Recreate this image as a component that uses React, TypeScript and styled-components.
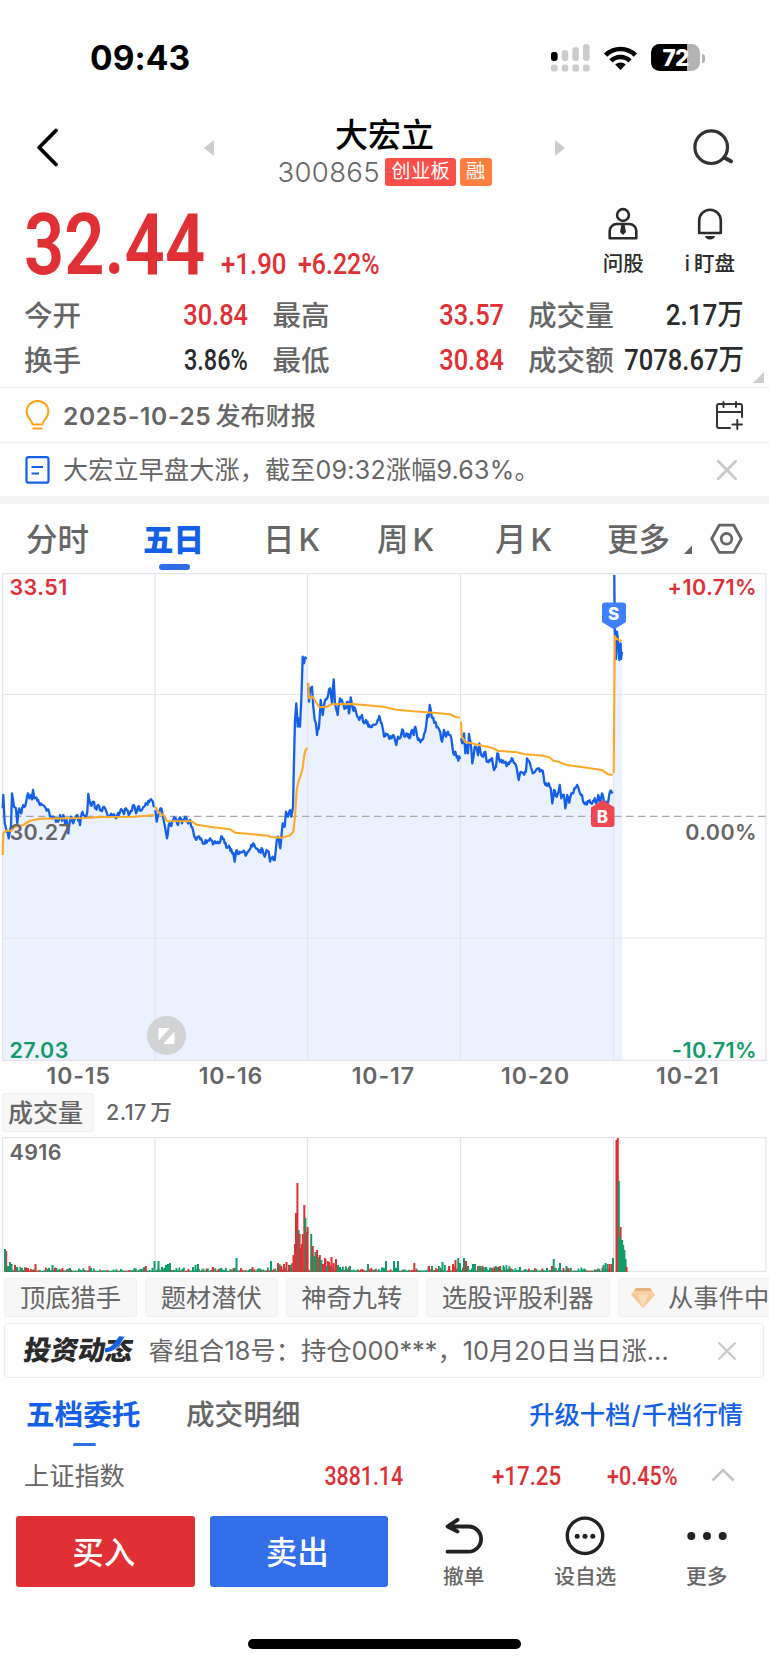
import React from 'react';
import styled, { createGlobalStyle } from 'styled-components';

const RED = '#e03035';
const BLUE = '#1560e8';
const GREEN = '#129b6a';
const GRAY = '#666';
const DARK = '#2b2b2b';

const cjk = `Inter, 'Noto Sans CJK SC', sans-serif`;

const Global = createGlobalStyle`
  * { box-sizing: border-box; }
  body { margin: 0; background: #fff; font-family: ${cjk}; color: ${DARK}; }
  svg { display: block; flex: none; }
`;

const Screen = styled.div`
  width: 769px;
  height: 1665px;
  overflow: hidden;
  display: flex;
  flex-direction: column;
  background: #fefefe;
  white-space: nowrap;
`;

/* Narrow figures used for prices and percentages */
const Num = styled.span<{ $size: number; $x?: number; $color?: string; $origin?: string; $weight?: number }>`
  display: inline-block;
  font-family: Roboto, 'Noto Sans CJK SC', sans-serif;
  font-weight: ${p => p.$weight ?? 500};
  font-size: ${p => p.$size}px;
  line-height: 1;
  color: ${p => p.$color ?? DARK};
  transform: scaleX(${p => p.$x ?? 0.875});
  transform-origin: ${p => p.$origin ?? 'right'} center;
`;

const StatusBar = styled.div`
  height: 110px;
  padding: 5px 64px 0 90px;
  display: flex;
  align-items: center;
  justify-content: space-between;
`;
const Clock = styled.div`
  font: 700 33.5px/1 Inter, sans-serif;
  color: #000;
  padding-top: 2px;
  letter-spacing: 0.1px;
`;
const StatusIcons = styled.div`
  display: flex;
  align-items: center;
  gap: 14px;
`;
const Battery = styled.div`
  position: relative;
  width: 49px;
  height: 27px;
  border-radius: 8.5px;
  background: linear-gradient(90deg, #000 0 73%, #b3b3b3 73%);
  color: #fff;
  font: 800 22.5px/27.5px Inter, sans-serif;
  text-align: center;
  letter-spacing: -0.8px;
  margin-right: 5px;
  &::after {
    content: '';
    position: absolute;
    left: 50.5px;
    top: 9.5px;
    width: 3px;
    height: 9px;
    border-radius: 0 4px 4px 0;
    background: #b3b3b3;
  }
`;

const Header = styled.header`
  height: 85px;
  padding: 0 34px 0 36px;
  display: flex;
  justify-content: space-between;
`;
const HeaderIcon = styled.div`
  width: 42px;
  padding-top: 18px;
  display: flex;
`;
const Pager = styled.div`
  width: 362px;
  margin-right: 2px;
  display: flex;
  justify-content: space-between;
  svg { margin-top: 30px; }
`;
const TitleBlock = styled.div`
  display: flex;
  flex-direction: column;
  align-items: center;
`;
const Title = styled.h1`
  margin: 6px 0 0;
  font: 500 33px/38px ${cjk};
  color: #000;
`;
const CodeRow = styled.div`
  margin-top: 4px;
  display: flex;
  align-items: center;
  gap: 4px;
  font: 400 27.5px/28px Inter, sans-serif;
  letter-spacing: 0.35px;
  color: ${GRAY};
`;
const Code = styled.span`
  margin-right: 1.5px;
  font-weight: 350;
`;
const Tag = styled.span<{ $bg: string }>`
  height: 27.5px;
  padding: 0 6px;
  border-radius: 3px;
  background: ${p => p.$bg};
  color: #fff;
  font: 400 19.2px/27px ${cjk};
`;

const Quote = styled.section`
  position: relative;
  height: 192px;
  padding: 0 26px 0 24px;
`;
const PriceRow = styled.div`
  height: 98px;
  display: flex;
  justify-content: space-between;
`;
const PriceGroup = styled.div`
  display: flex;
  align-items: baseline;
`;
const Price = styled.div`
  width: 197px;
  padding-top: 7px;
`;
const Change = styled.div<{ $w: number }>`
  width: ${p => p.$w}px;
`;
const Actions = styled.div`
  display: flex;
  padding: 11px 8px 0 0;
  gap: 41px;
`;
const Action = styled.div`
  display: flex;
  flex-direction: column;
  align-items: center;
  font: 500 20.5px/24px ${cjk};
  svg { margin-bottom: 12px; }
`;
const SpacedI = styled.span`
  margin-right: 4px;
`;
const Stats = styled.div`
  display: grid;
  grid-template-columns: 61px 163px 24.5px 58px 173px 24.5px 90px 126px;
  grid-template-rows: 45px 45px;
  align-items: center;
`;
const StatLabel = styled.span`
  font: 500 28.6px/45px ${cjk};
  color: ${GRAY};
`;
const StatValue = styled.span`
  text-align: right;
  display: flex;
  justify-content: flex-end;
`;
const Corner = styled.svg`
  position: absolute;
  right: 5px;
  bottom: 4px;
`;

const Notice = styled.div<{ $h: number }>`
  height: ${p => p.$h}px;
  border-top: 1.5px solid #efefef;
  padding: 0 26px 0 25px;
  display: flex;
  align-items: center;
  gap: 13px;
  color: ${GRAY};
`;
const NoticeText = styled.span<{ $medium?: boolean }>`
  flex: 1;
  padding-top: ${p => (p.$medium ? 2 : 0)}px;
  font: ${p => (p.$medium ? 500 : 400)} 25px/36px ${cjk};
  letter-spacing: ${p => (p.$medium ? 0.1 : 0.25)}px;
`;
const NoticeDate = styled.span`
  margin-right: 4px;
  font-weight: 600;
  font-size: 24.5px;
  letter-spacing: 0.7px;
`;
const Band = styled.div`
  height: 8px;
  background: #f3f3f3;
`;

const PeriodTabs = styled.nav`
  height: 69px;
  padding: 0 25px 0 26px;
  display: grid;
  grid-template-columns: 117px 120px 114px 118px 112px 76px 27px 33px;
  color: ${GRAY};
  > svg { margin-top: 19px; }
`;
const PeriodTab = styled.div<{ $on?: boolean }>`
  position: relative;
  font: ${p => (p.$on ? 800 : 500)} ${p => (p.$on ? 30.5 : 31.5)}px/71px ${cjk};
  color: ${p => (p.$on ? BLUE : GRAY)};
  word-spacing: -4.5px;
`;
const TabLine = styled.i<{ $w: number; $x: number; $h: number; $b: number }>`
  position: absolute;
  left: ${p => p.$x}px;
  bottom: ${p => p.$b}px;
  width: ${p => p.$w}px;
  height: ${p => p.$h}px;
  border-radius: 3px;
  background: #2f6ce8;
`;

const ChartBox = styled.div<{ $h: number }>`
  position: relative;
  height: ${p => p.$h}px;
`;
const ChartLabel = styled.span<{ $c?: string; $y: number; $right?: boolean }>`
  position: absolute;
  ${p => (p.$right ? 'right: 12px' : 'left: 9.5px')};
  top: ${p => p.$y}px;
  font: 560 21.5px/22px Inter, sans-serif;
  letter-spacing: 0.4px;
  color: ${p => p.$c ?? GRAY};
`;
const ExpandButton = styled.div`
  position: absolute;
  left: 146.5px;
  top: 443px;
`;
const Marker = styled.div<{ $x: number; $y: number }>`
  position: absolute;
  left: ${p => p.$x}px;
  top: ${p => p.$y}px;
`;
const Dates = styled.div`
  height: 29px;
  padding: 0 5px 0 2.5px;
  display: grid;
  grid-template-columns: repeat(5, 1fr);
  text-align: center;
  font: 560 23px/31px Inter, sans-serif;
  letter-spacing: 0.9px;
  color: ${GRAY};
`;
const VolumeHead = styled.div`
  height: 47px;
  padding: 3px 2px 5px;
  display: flex;
  gap: 12px;
  font: 500 21.5px/38px ${cjk};
  letter-spacing: 0.4px;
  color: ${GRAY};
  word-spacing: -2.5px;
`;
const VolumeChip = styled.div`
  width: 92px;
  height: 39px;
  border: 1px solid #efefef;
  border-radius: 3px;
  background: #f7f7f7;
  padding-left: 5px;
  font: 500 25px/39px ${cjk};
  letter-spacing: 0;
`;

const Chips = styled.div`
  height: 45px;
  padding: 6px 0 0 4px;
  display: flex;
  gap: 8px;
  overflow: hidden;
`;
const Chip = styled.div<{ $w: number; $start?: boolean }>`
  flex: none;
  width: ${p => p.$w}px;
  height: 39px;
  border: 1px solid #f0f0f0;
  border-radius: 3px;
  background: #f7f7f7;
  color: ${GRAY};
  font: 400 25.3px/38px ${cjk};
  display: flex;
  align-items: center;
  justify-content: ${p => (p.$start ? 'flex-start' : 'center')};
  padding-left: ${p => (p.$start ? 12.5 : 0)}px;
  gap: 13px;
`;
const Banner = styled.div`
  margin: 6px 5px 0 4px;
  height: 55px;
  border: 1.5px solid #eee;
  border-radius: 4px;
  padding: 0 27px 0 18.5px;
  display: flex;
  align-items: center;
`;
const Logo = styled.div`
  position: relative;
  width: 125px;
  font: 900 27.2px/53px ${cjk};
  color: ${DARK};
  span { display: inline-block; transform: skewX(-9deg); }
  svg { position: absolute; left: 80px; top: 12px; }
`;
const BannerText = styled.span`
  flex: 1;
  font: 400 25.3px/52px ${cjk};
  color: ${GRAY};
`;

const OrderTabs = styled.div`
  height: 71px;
  padding: 0 26px;
  display: flex;
`;
const OrderTab = styled.div<{ $on?: boolean }>`
  position: relative;
  width: 160px;
  font: ${p => (p.$on ? 700 : 500)} 28.6px/73px ${cjk};
  color: ${p => (p.$on ? BLUE : GRAY)};
`;
const OrderLink = styled.a`
  margin-left: auto;
  font: 500 25.3px/73px ${cjk};
  color: ${BLUE};
  span { margin: 0 1px; }
`;
const IndexRow = styled.div`
  height: 56px;
  padding: 0 34px 0 24px;
  display: grid;
  grid-template-columns: 140px 239px 158.5px 116px 1fr;
  align-items: center;
  font: 400 25.2px/50px ${cjk};
  color: ${GRAY};
  > svg { justify-self: end; margin-bottom: 5px; }
`;
const IndexName = styled.span`
  margin-top: -2px;
`;

const BottomBar = styled.div`
  height: 95px;
  padding: 11px 14px 0 16px;
  display: flex;
`;
const Trade = styled.button<{ $bg: string }>`
  flex: none;
  width: 178.5px;
  height: 71px;
  margin-right: 15px;
  padding: 0 3px 0 0;
  border: 0;
  border-radius: 3px;
  background: ${p => p.$bg};
  color: #fff;
  font: 500 31.5px/74px ${cjk};
`;
const Tools = styled.div`
  flex: none;
  display: grid;
  grid-template-columns: repeat(3, 121.5px);
`;
const Tool = styled.div`
  display: flex;
  flex-direction: column;
  align-items: center;
  font: 500 20.7px/24px ${cjk};
  color: ${GRAY};
  svg { margin-bottom: 9px; }
`;
const HomeIndicator = styled.div`
  width: 273px;
  height: 10px;
  margin: 39px 0 0 248px;
  border-radius: 5px;
  background: #000;
`;

/* ---- chart data: values are on a triple-density grid ---- */
type Pt = [number, number];
const series = (s: string, dx: number, dy: number): Pt[] =>
  s.trim().split(/\s+/).map(p => {
    const [x, y] = p.split(',').map(Number);
    return [dx + x / 3, dy + y / 3] as Pt;
  });

const PRICE: Pt[][] = [
  series(`8,745 10,705 14,790 20,815 26,835 33,800 36,700 42,740 48,745 52,790 58,745 64,760 70,735 76,738 84,700 88,715 92,705 96,718 99,690 103,715 112,722 120,735 134,740 140,752 145,748 150,770 162,772 174,785 180,765 186,782 190,765 195,790 200,780 205,820 212,770 220,790 226,775 232,765 240,795 245,760 255,770 262,755 265,702 272,735 280,725 287,745 295,735 303,750 312,740 320,758 328,770 336,765 348,775 360,755 366,750 372,762 378,745 386,765 393,752 401,735 408,760 414,740 422,752 432,740 440,730 450,720 456,722 463,738`, 0, 560),
  series(`466,750 470,785 476,760 484,745 490,775 496,805 501,835 506,795 514,798 520,780 528,775 534,795 540,772 546,790 556,770 562,785 570,780 574,800 586,835 595,830 606,842 620,848 630,835 642,850 656,850 666,830 674,850 684,862 694,868 700,880 704,905 708,875 716,882 728,875 740,882 748,870 760,850 768,865 776,875 788,870 794,890 800,870 806,875 810,905 818,890 824,900 830,840 836,835 841,865 848,790 854,800 858,755 864,770 870,750 874,770 879,740 882,600 885,480 889,430 893,500 896,475 900,500 904,420 908,290 912,310 916,292 919,298`, 0, 560),
  series(`84,190 87,245 92,205 96,200 100,260 104,300 108,310 111,345 118,310 122,240 128,285 134,245 142,235 150,205 156,250 161,178 165,250 173,285 180,235 188,250 196,265 203,245 207,280 212,232 218,265 226,268 232,290 238,300 246,285 252,310 258,300 265,320 278,315 290,310 298,288 305,310 312,350 320,345 330,355 340,345 349,375 354,350 360,355 367,328 374,350 380,340 388,355 396,330 401,345 406,320 414,360 424,360 430,355 438,320 442,285 446,290 449,255 455,290 465,305 472,320 478,330 486,365 492,330 498,350 504,335 514,355 520,400 526,395 530,412 540,418`, 280, 620),
  series(`543,355 547,370 552,340 556,400 560,375 564,400 567,342 572,370 577,430 584,380 590,385 594,405 598,370 604,405 610,410 616,395 620,425 628,420 636,415 642,450 648,440 652,400 660,425 672,428 682,435 690,425 698,418 704,430 712,455 716,480 720,460 730,460 738,455 741,415 750,430 758,460 768,450 788,452 796,495 806,490 812,505 817,550 822,510 830,530 839,495 844,535 852,525 856,565 862,525 868,548 874,520 880,520 886,505 894,500 900,520 906,525 912,550 926,545 936,552 944,535 948,550 955,525 960,550 966,520 974,550 985,545 990,515 998,520`, 280, 620),
  series(`163,45 164.5,210 168,297 171,215 174,240 178,300 182,250 183,297 186,275`, 560, 560),
];
const AVERAGE: Pt[][] = [
  series(`8,885 10,820 18,812 35,812 45,800 70,795 90,782 120,776 260,774 300,771 400,770 440,767 463,765`, 0, 560),
  series(`466,740 478,760 492,766 500,783 575,784 590,794 640,802 690,808 706,818 760,823 805,827 812,831 845,833 870,826 880,815 885,770 890,690 896,662 901,650 908,625 912,590 916,572 921,563`, 0, 560),
  series(`84,188 87,235 98,230 106,243 118,262 140,260 155,253 220,252 250,255 310,260 350,269 400,274 460,278 510,283 525,290 540,293`, 280, 620),
  series(`543,305 545,350 555,365 600,376 630,382 655,392 710,397 735,403 790,407 808,412 820,422 835,425 860,435 900,440 940,446 965,450 985,463 998,465`, 280, 620),
  series(`161,640 164.5,228 168,236 185,243`, 560, 560),
];

const rand = (n: number) => {
  const v = Math.sin(n * 12.9898) * 43758.5453;
  return v - Math.floor(v);
};
/* Adds the tick-to-tick movement between two key prices */
const ticks = (pts: Pt[]): Pt[] => {
  const out: Pt[] = [];
  pts.forEach((p, i) => {
    out.push(p);
    const q = pts[i + 1];
    if (!q || q[0] - p[0] < 1.6) return;
    const n = Math.round((q[0] - p[0]) / 0.9);
    for (let k = 1; k < n; k++) {
      const t = k / n;
      out.push([p[0] + (q[0] - p[0]) * t, p[1] + (q[1] - p[1]) * t + (rand(p[0] * 7 + k) - 0.5) * 5]);
    }
  });
  return out;
};
const path = (pts: Pt[]) => 'M' + pts.map(p => `${p[0].toFixed(1)} ${p[1].toFixed(1)}`).join('L');
const DAYS = PRICE.map((d, i) => (i < 4 ? ticks(d) : d));
const GRID_X = [2.5, 155, 307.5, 460.5, 613.5, 766];

const PriceChart = () => (
  <svg width="769" height="488" viewBox="0 573 769 488" fill="none">
    {DAYS.map((d, i) => (
      <path
        key={i}
        d={`${path(d)}L${i < 4 ? GRID_X[i + 1] : d[d.length - 1][0]} ${d[d.length - 1][1]}V1060.5H${i < 4 ? GRID_X[i] : 613.5}V${d[0][1]}Z`}
        fill="#ebf1ff"
      />
    ))}
    {GRID_X.map(x => <path key={x} d={`M${x} 573V1061`} stroke="#e5e5e8" strokeWidth="1.2" />)}
    {[573.7, 694.5, 938, 1060.3].map(y => <path key={y} d={`M2 ${y}H766`} stroke="#e3e5ea" strokeWidth="1.2" />)}
    <path d="M2 816.3H766" stroke="#a9a9a9" strokeWidth="1.2" strokeDasharray="7.5 4.5" />
    {DAYS.map((d, i) => <path key={i} d={path(d)} stroke={BLUE} strokeWidth="2.3" strokeLinejoin="round" />)}
    {AVERAGE.map((d, i) => <path key={i} d={path(d)} stroke="#ffa927" strokeWidth="2.1" strokeLinejoin="round" />)}
  </svg>
);

/* Tall volume bars: x, height, r(ise) or g(reen) */
const PEAKS: [number, number, 'r' | 'g'][] = [
  [6.2, 21, 'r'], [5, 23, 'g'], [8, 6, 'g'], [10, 10, 'g'], [11.5, 8, 'g'], [15, 7, 'r'], [17, 5, 'g'], [22, 4, 'g'], [26, 4.5, 'r'], [28, 4, 'r'],
  [35.5, 8, 'r'], [49, 4, 'g'], [52.5, 7, 'g'], [55, 4, 'r'], [70, 4, 'g'], [89.5, 6, 'r'], [91, 4, 'g'], [144, 5, 'g'], [145.8, 6, 'r'], [154.5, 11, 'g'],
  [158.5, 11, 'g'], [162, 5, 'g'], [166, 7, 'g'], [168, 8, 'g'], [170, 9, 'g'], [193, 5, 'g'], [195.5, 7, 'g'], [198, 8, 'g'], [213, 5, 'r'], [236.5, 14, 'g'],
  [252.5, 5, 'r'], [271, 11, 'g'], [278, 9, 'r'], [281, 6, 'r'], [284, 8, 'r'], [286.5, 10, 'r'], [289, 7, 'r'], [291, 7, 'g'],
  [293.5, 17, 'r'], [295, 28, 'r'], [296, 59, 'r'], [297.4, 89, 'r'], [298.6, 42, 'g'], [299.6, 38, 'r'], [300.6, 24, 'r'], [301.8, 28, 'r'], [302.8, 38, 'r'], [304.3, 67, 'r'],
  [305.4, 54, 'g'], [306.6, 40, 'r'], [307.6, 45, 'r'], [311.2, 38, 'g'], [312.8, 26, 'r'], [314, 16, 'g'], [315.5, 20, 'g'], [317, 22, 'r'], [318.2, 15, 'g'],
  [319.8, 17, 'r'], [321.3, 12, 'g'], [323, 8, 'r'], [325.4, 13, 'r'], [327, 6, 'g'], [329, 10, 'r'], [331.5, 15, 'r'], [333.5, 9, 'r'], [336, 13, 'r'], [338, 7, 'g'],
  [340, 5, 'g'], [346, 5, 'g'], [350, 6, 'g'], [368, 8, 'g'], [386, 11, 'g'], [394, 11, 'g'], [398, 11, 'g'],
  [414.3, 9, 'r'], [429, 6, 'r'], [432, 6, 'g'], [442.5, 10, 'g'], [449, 6, 'r'], [453, 8, 'r'], [455.5, 12, 'r'], [458.3, 14, 'g'], [460, 9, 'g'],
  [464, 14, 'g'], [466, 11, 'r'], [468, 6, 'g'], [473, 8, 'g'], [475, 8, 'g'], [480, 6, 'g'], [486, 5, 'g'], [497, 5, 'g'], [499.5, 6, 'r'], [504, 5, 'g'],
  [520, 5, 'g'], [547, 4, 'g'], [552, 6, 'r'], [553.7, 13, 'g'], [560, 9, 'g'], [566.5, 6, 'g'], [568.5, 4, 'r'], [603.5, 7, 'g'], [605.5, 9, 'g'], [607.5, 8, 'g'], [609.5, 8, 'r'], [611.5, 8, 'r'], [613, 14, 'g'],
  [616.5, 132, 'r'], [617.8, 134, 'r'], [618.8, 91, 'g'], [620.6, 45, 'r'], [620, 35, 'g'], [622, 32, 'g'], [623.2, 27, 'g'], [624.4, 22, 'g'], [625.6, 13, 'g'], [626.6, 5, 'r'],
];
const busy = (x: number) =>
  x < 30 ? 4 : x > 310 && x < 335 ? 13 : x > 276 && x < 292 ? 8 : (x > 335 && x < 350) || (x > 425 && x < 510) ? 6 : x > 600 ? 6 : 3.4;
const BASE = Array.from({ length: 406 }, (_, i) => {
  const x = 4.5 + i * 1.5;
  return { x, h: 1.2 + Math.pow(rand(i + 3), 2) * busy(x), c: rand(i + 900) > 0.68 ? RED : GREEN };
});

const VolumeChart = () => (
  <svg width="769" height="135" viewBox="0 1137 769 135" fill="none">
    {GRID_X.map(x => <path key={x} d={`M${x} 1137V1272`} stroke="#e5e5e8" strokeWidth="1.2" />)}
    <path d="M2 1137.6H766M2 1271.5H766" stroke="#e5e5e8" strokeWidth="1.3" />
    {BASE.map(b => <rect key={b.x} x={b.x} y={1272 - b.h} width="1.8" height={b.h} fill={b.c} />)}
    {PEAKS.map(([x, h, c]) => <rect key={x} x={x - 1} y={1272 - h} width="2" height={h} fill={c === 'r' ? RED : GREEN} />)}
  </svg>
);

const CloseBox = styled.div<{ $pad?: number }>`
  padding-right: ${p => p.$pad ?? 0}px;
`;
const Close = ({ size, w, pad }: { size: number; w: number; pad?: number }) => (
  <CloseBox $pad={pad}>
    <svg width={size} height={size} viewBox="0 0 20 20"><path d="M1.3 1.3 18.7 18.7M18.7 1.3 1.3 18.7" stroke="#c8c8c8" strokeWidth={w} strokeLinecap="round" /></svg>
  </CloseBox>
);

export default function App() {
  return (
    <Screen>
      <Global />
      <StatusBar>
        <Clock>09:43</Clock>
        <StatusIcons>
          <svg width="39" height="28" viewBox="0 0 39 28" fill="#ccc">
            <rect x="0" y="8" width="6.6" height="9" rx="2.4" fill="#000" />
            <rect x="10.7" y="6.3" width="6.6" height="10.7" rx="2.4" />
            <rect x="21.3" y="3.3" width="6.6" height="13.7" rx="2.4" />
            <rect x="32" y="0.3" width="6.6" height="16.7" rx="2.4" />
            {[0, 10.7, 21.3, 32].map(x => <rect key={x} x={x} y="20.5" width="6.6" height="7" rx="2.6" />)}
          </svg>
          <svg width="33" height="24" viewBox="0 0 33 24" fill="none" stroke="#000" strokeWidth="4.6">
            <path d="M1.6 9.2a21 21 0 0 1 29.8 0" />
            <path d="M7 14.9a13.4 13.4 0 0 1 19 0" />
            <path d="M16.5 24 11.2 18.6a7.5 7.5 0 0 1 10.6 0Z" fill="#000" stroke="none" />
          </svg>
          <Battery>72</Battery>
        </StatusIcons>
      </StatusBar>

      <Header>
        <HeaderIcon>
          <svg width="23" height="39" viewBox="0 0 23 39" fill="none" stroke="#000" strokeWidth="3.8" strokeLinecap="round" strokeLinejoin="round"><path d="M20 2.5 3.2 19.5 20 36.5" /></svg>
        </HeaderIcon>
        <Pager>
          <svg width="10" height="16" viewBox="0 0 10 16" fill="#ccc"><path d="M10 0V16L0 8Z" /></svg>
          <TitleBlock>
            <Title>大宏立</Title>
            <CodeRow><Code>300865</Code><Tag $bg="#fb4f4a">创业板</Tag><Tag $bg="#ff7f41">融</Tag></CodeRow>
          </TitleBlock>
          <svg width="10" height="16" viewBox="0 0 10 16" fill="#ccc"><path d="M0 0V16L10 8Z" /></svg>
        </Pager>
        <HeaderIcon>
          <svg width="42" height="40" viewBox="0 0 42 40" fill="none" stroke="#333" strokeWidth="3.2"><circle cx="18.2" cy="19.2" r="16.3" /><path d="M31.500 29.800 38 33.300" strokeWidth="4" strokeLinecap="round" /></svg>
        </HeaderIcon>
      </Header>

      <Quote>
        <PriceRow>
          <PriceGroup>
            <Price><Num $size={86} $x={0.82} $color={RED} $origin="left" $weight={600}>32.44</Num></Price>
            <Change $w={77}><Num $size={29} $x={0.89} $color={RED} $origin="left">+1.90</Num></Change>
            <Change $w={80}><Num $size={29} $x={0.86} $color={RED} $origin="left">+6.22%</Num></Change>
          </PriceGroup>
          <Actions>
            <Action>
              <svg width="32" height="34" viewBox="0 0 32 34" fill="none" stroke={DARK} strokeWidth="2.6">
                <circle cx="16" cy="9" r="5.9" />
                <path d="M2.7 32.3V25a7 7 0 0 1 7-7h12.6a7 7 0 0 1 7 7v7.3Z" strokeLinejoin="round" />
                <path d="M14.3 19h3.4l1.3 7-3 3-3-3Z" fill={DARK} stroke="none" />
              </svg>
              问股
            </Action>
            <Action>
              <svg width="28" height="34" viewBox="0 0 28 34" fill="none" stroke={DARK} strokeWidth="2.6">
                <path d="M3.2 27V14.5a10.8 10.8 0 0 1 21.6 0V27Z" strokeLinejoin="round" />
                <path d="M9 30h10a5 3.5 0 0 1-10 0Z" fill={DARK} stroke="none" />
              </svg>
              <div><SpacedI>i</SpacedI>盯盘</div>
            </Action>
          </Actions>
        </PriceRow>
        <Stats>
          <StatLabel>今开</StatLabel><StatValue><Num $size={29} $color={RED}>30.84</Num></StatValue><i />
          <StatLabel>最高</StatLabel><StatValue><Num $size={29} $color={RED}>33.57</Num></StatValue><i />
          <StatLabel>成交量</StatLabel><StatValue><Num $size={29} $x={0.9}>2.17万</Num></StatValue>
          <StatLabel>换手</StatLabel><StatValue><Num $size={29} $x={0.81}>3.86%</Num></StatValue><i />
          <StatLabel>最低</StatLabel><StatValue><Num $size={29} $color={RED}>30.84</Num></StatValue><i />
          <StatLabel>成交额</StatLabel><StatValue><Num $size={29} $x={0.88}>7078.67万</Num></StatValue>
        </Stats>
        <Corner width="11" height="11" viewBox="0 0 11 11"><path d="M11 0V11H0Z" fill="#ccc" /></Corner>
      </Quote>

      <Notice $h={55}>
        <svg width="25" height="30" viewBox="0 0 25 30" fill="none" stroke="#ffa31a" strokeWidth="2">
          <path d="M7.5 24.5c0-4-5.9-6.5-5.9-13a10.9 10.5 0 0 1 21.8 0c0 6.5-5.9 9-5.9 13Z" strokeLinejoin="round" />
          <path d="M7.5 28.5h10" />
        </svg>
        <NoticeText $medium><NoticeDate>2025-10-25</NoticeDate>发布财报</NoticeText>
        <svg width="27" height="29" viewBox="0 0 27 29" fill="none" stroke="#333" strokeWidth="2" strokeLinecap="round">
          <path d="M26 16V5a2 2 0 0 0-2-2H3a2 2 0 0 0-2 2V25a2 2 0 0 0 2 2H14M1 11H26M7.5 1V6M20 1V6M16.5 23.5H26M21.3 19V28" />
        </svg>
      </Notice>
      <Notice $h={54}>
        <svg width="25" height="28" viewBox="0 0 25 28" fill="none" stroke={BLUE} strokeWidth="2.2">
          <rect x="1.5" y="1.2" width="22" height="25.5" rx="2" /><path d="M6.5 11H18M6.5 17.5H14" />
        </svg>
        <NoticeText>大宏立早盘大涨，截至09:32涨幅9.63%。</NoticeText>
        <Close size={20} w={2.7} pad={6} />
      </Notice>
      <Band />

      <PeriodTabs>
        <PeriodTab>分时</PeriodTab>
        <PeriodTab $on>五日<TabLine $w={31} $h={6} $x={16} $b={5.5} /></PeriodTab>
        <PeriodTab>日 K</PeriodTab>
        <PeriodTab>周 K</PeriodTab>
        <PeriodTab>月 K</PeriodTab>
        <PeriodTab>更多</PeriodTab>
        <svg width="9" height="32" viewBox="0 0 9 32"><path d="M9 22.5V31H1Z" fill="#666" /></svg>
        <svg width="33" height="32" viewBox="0 0 33 32" fill="none" stroke="#666" strokeWidth="2.8" strokeLinejoin="round">
          <path d="M9.2 2.2H23.8L31.3 15.8 23.8 29.4H9.2L1.7 15.8Z" /><circle cx="16.5" cy="15.8" r="5.3" />
        </svg>
      </PeriodTabs>

      <ChartBox $h={488}>
        <PriceChart />
        <ChartLabel $c={RED} $y={3}>33.51</ChartLabel>
        <ChartLabel $c={RED} $y={3} $right>+10.71%</ChartLabel>
        <ChartLabel $y={247.5}>30.27</ChartLabel>
        <ChartLabel $y={247.5} $right>0.00%</ChartLabel>
        <ChartLabel $c={GREEN} $y={466}>27.03</ChartLabel>
        <ChartLabel $c={GREEN} $y={466} $right>-10.71%</ChartLabel>
        <Marker $x={602} $y={29}>
          <svg width="24" height="28" viewBox="0 0 24 28">
            <path d="M3 .5H21a3 3 0 0 1 3 3V20L12 27.5 0 20V3.5a3 3 0 0 1 3-3Z" fill="#3f80ff" />
            <text x="11.5" y="18" textAnchor="middle" fontFamily="Inter, sans-serif" fontWeight="800" fontSize="17" fill="#fff">S</text>
          </svg>
        </Marker>
        <Marker $x={590.5} $y={227}>
          <svg width="24" height="28" viewBox="0 0 24 28">
            <path d="M0 7.5 12 0 23.5 7.5V24a3 3 0 0 1-3 3H3a3 3 0 0 1-3-3Z" fill="#ef4650" />
            <text x="11.5" y="22.5" textAnchor="middle" fontFamily="Inter, sans-serif" fontWeight="800" fontSize="17" fill="#fff">B</text>
          </svg>
        </Marker>
        <ExpandButton>
          <svg width="39" height="39" viewBox="0 0 39 39">
            <circle cx="19.5" cy="19.5" r="19.5" fill="#d2d3d5" />
            <path d="M12 12.5H22L12 23.5ZM27 16.5V27.5H17Z" fill="#fff" stroke="#fff" strokeLinejoin="round" />
          </svg>
        </ExpandButton>
      </ChartBox>
      <Dates><span>10-15</span><span>10-16</span><span>10-17</span><span>10-20</span><span>10-21</span></Dates>
      <VolumeHead><VolumeChip>成交量</VolumeChip>2.17 万</VolumeHead>
      <ChartBox $h={135}>
        <VolumeChart />
        <ChartLabel $y={4}>4916</ChartLabel>
      </ChartBox>

      <Chips>
        <Chip $w={133}>顶底猎手</Chip>
        <Chip $w={132.5}>题材潜伏</Chip>
        <Chip $w={132.5}>神奇九转</Chip>
        <Chip $w={183.5}>选股评股利器</Chip>
        <Chip $w={190} $start>
          <svg width="24" height="20" viewBox="0 0 24 20">
            <path d="M5 0H19L24 6.5 12 20 0 6.5Z" fill="#f8cfa0" /><path d="M5 0H19L21 3H3Z" fill="#eab07c" /><path d="M0 6.5H24L12 20Z" fill="#f6c797" /><path d="M6.5 6.5H17.5L12 20Z" fill="#fbdcb8" />
          </svg>
          从事件中
        </Chip>
      </Chips>
      <Banner>
        <Logo>
          <span>投资动态</span>
          <svg width="32" height="18" viewBox="0 0 32 18" fill="none">
            <path d="M1 16C12 15 14 4 20 1" stroke="#fff" strokeWidth="5" />
            <path d="M1 12.5C9 11.5 12 4 15 .5H20.5C17 7 13 15.5 1 16.5Z" fill={BLUE} />
          </svg>
        </Logo>
        <BannerText>睿组合18号：持仓000***，10月20日当日涨...</BannerText>
        <Close size={18} w={2.4} />
      </Banner>

      <OrderTabs>
        <OrderTab $on>五档委托<TabLine $w={23} $h={3} $x={47} $b={3} /></OrderTab>
        <OrderTab>成交明细</OrderTab>
        <OrderLink>升级十档<span>/</span>千档行情</OrderLink>
      </OrderTabs>
      <IndexRow>
        <IndexName>上证指数</IndexName>
        <StatValue><Num $size={25.5} $x={0.835} $color={RED}>3881.14</Num></StatValue>
        <StatValue><Num $size={25.5} $color={RED}>+17.25</Num></StatValue>
        <StatValue><Num $size={25.5} $x={0.845} $color={RED}>+0.45%</Num></StatValue>
        <svg width="24" height="16" viewBox="0 0 24 16" fill="none" stroke="#c4c4c4" strokeWidth="2.6"><path d="M1.5 13.5 12 3 22.5 13.5" /></svg>
      </IndexRow>

      <BottomBar>
        <Trade $bg={RED}>买入</Trade>
        <Trade $bg="#326fe8">卖出</Trade>
        <Tools>
          <Tool>
            <svg width="40" height="40" viewBox="0 0 40 40" fill="none" stroke="#222" strokeWidth="3.8" strokeLinecap="round" strokeLinejoin="round"><path d="M13.5 3.8 3.5 10.5 13.5 15.5M4 10.5H24.5a12.6 12.6 0 0 1 0 25.2H3.5" /></svg>
            撤单
          </Tool>
          <Tool>
            <svg width="40" height="40" viewBox="0 0 40 40" fill="#222"><circle cx="20" cy="19.8" r="17.7" fill="none" stroke="#222" strokeWidth="3.4" /><circle cx="12.2" cy="20.3" r="2.5" /><circle cx="20" cy="20.3" r="2.5" /><circle cx="27.8" cy="20.3" r="2.5" /></svg>
            设自选
          </Tool>
          <Tool>
            <svg width="40" height="40" viewBox="0 0 40 40" fill="#222"><circle cx="4.3" cy="20" r="4" /><circle cx="20" cy="20" r="4" /><circle cx="35.7" cy="20" r="4" /></svg>
            更多
          </Tool>
        </Tools>
      </BottomBar>
      <HomeIndicator />
    </Screen>
  );
}
